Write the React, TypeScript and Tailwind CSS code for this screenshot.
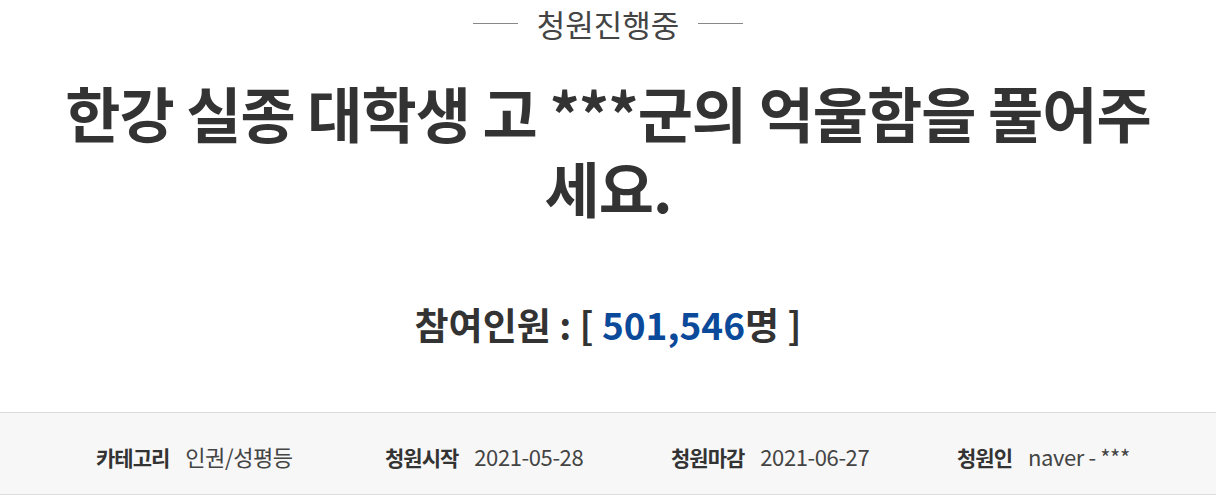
import React from 'react';

const meta = [
  { label: '카테고리', value: '인권/성평등', w: 'w-[289px]' },
  { label: '청원시작', value: '2021-05-28', w: 'w-[286px]' },
  { label: '청원마감', value: '2021-06-27', w: 'w-[286px]' },
  { label: '청원인', value: 'naver - ***', w: 'w-[200px]' },
];

export default function App() {
  return (
    <div
      className="w-[1216px] h-[501px] bg-white text-[#333] overflow-hidden"
      style={{ fontFamily: '"Noto Sans CJK KR", "Noto Sans", sans-serif' }}
    >
      {/* status */}
      <div className="flex items-center justify-center gap-[19px] pt-[2px] h-[44px]">
        <span className="w-[45px] h-px bg-[#888]" />
        <span className="text-[31px] leading-none text-[#444]">청원진행중</span>
        <span className="w-[45px] h-px bg-[#888]" />
      </div>

      {/* title */}
      <h1 className="mt-[30px] text-center text-[60px] font-bold tracking-[-1px]">
        <div className="h-[75px] leading-[75px]">한강 실종 대학생 고 ***군의 억울함을 풀어주</div>
        <div className="h-[75px] leading-[75px]">세요.</div>
      </h1>

      {/* count */}
      <div className="mt-[82px] text-center text-[37px] font-bold leading-none">
        참여인원 : [ <span className="text-[#0b4a9a]">501,546</span>명 ]
      </div>

      {/* info bar */}
      <div className="mt-[69px] h-[83px] border-y border-[#dcdcdc] bg-[#f7f7f7] flex items-center pt-[6px] pl-[96px]">
        {meta.map((m) => (
          <div key={m.label} className={`${m.w} flex items-baseline gap-[16px]`}>
            <span className="text-[21px] font-bold tracking-[-1px]">{m.label}</span>
            <span className="text-[22px] text-[#444] tracking-[-0.4px]">{m.value}</span>
          </div>
        ))}
      </div>
    </div>
  );
}
